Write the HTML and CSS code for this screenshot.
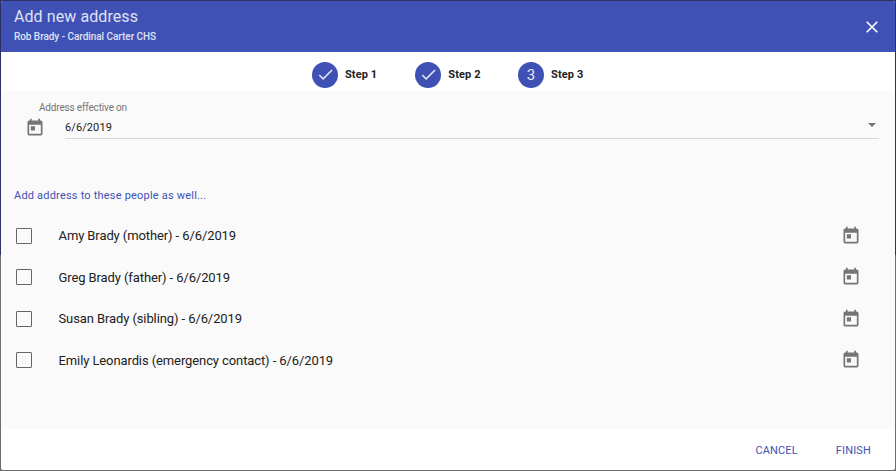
FILE: index.html
```html
<!DOCTYPE html>
<html lang="en">
<head>
<meta charset="utf-8">
<title>Add new address</title>
<link rel="stylesheet" href="styles.css">
</head>
<body>
<svg class="defs" aria-hidden="true">
  <symbol id="today" viewBox="0 0 24 24"><path d="M19 3h-1V1h-2v2H8V1H6v2H5c-1.11 0-1.99.9-1.99 2L3 19c0 1.1.89 2 2 2h14c1.1 0 2-.9 2-2V5c0-1.1-.9-2-2-2zm0 16H5V8h14v11zM7 10h5v5H7z"/></symbol>
  <symbol id="check" viewBox="0 0 24 24"><path d="M9 16.17L4.83 12l-1.42 1.41L9 19 21 7l-1.41-1.41z"/></symbol>
</svg>
<main class="dialog">
  <header class="header">
    <div>
      <h1 class="title">Add new address</h1>
      <p class="subtitle">Rob Brady - Cardinal Carter CHS</p>
    </div>
    <svg class="close" viewBox="0 0 12 12"><path d="M.7.7l10.6 10.6M11.3.7L.7 11.3"/></svg>
  </header>
  <nav class="steps">
    <div class="step"><span class="dot"><svg class="tick"><use href="#check"/></svg></span><b class="step-label">Step 1</b></div>
    <div class="step"><span class="dot"><svg class="tick"><use href="#check"/></svg></span><b class="step-label">Step 2</b></div>
    <div class="step"><span class="dot dot-number">3</span><b class="step-label">Step 3</b></div>
  </nav>
  <section class="content">
    <div class="date-label">Address effective on</div>
    <div class="date-row">
      <svg class="icon"><use href="#today"/></svg>
      <div class="date-input"><span class="date-value">6/6/2019</span><i class="arrow"></i></div>
    </div>
    <h2 class="people-title">Add address to these people as well...</h2>
    <ul class="people">
      <li class="person"><span class="box"></span><span class="name">Amy Brady (mother) - 6/6/2019</span><svg class="icon"><use href="#today"/></svg></li>
      <li class="person"><span class="box"></span><span class="name">Greg Brady (father) - 6/6/2019</span><svg class="icon"><use href="#today"/></svg></li>
      <li class="person"><span class="box"></span><span class="name">Susan Brady (sibling) - 6/6/2019</span><svg class="icon"><use href="#today"/></svg></li>
      <li class="person"><span class="box"></span><span class="name">Emily Leonardis (emergency contact) - 6/6/2019</span><svg class="icon"><use href="#today"/></svg></li>
    </ul>
  </section>
  <footer class="footer"><span class="action">CANCEL</span><span class="action">FINISH</span></footer>
</main>
</body>
</html>
```

FILE: styles.css
```css
* { box-sizing: border-box; margin: 0; padding: 0; }
body {
  height: 471px;
  padding: 1px;
  background: linear-gradient(#2d3265 0 255px, #6e6e6e 255px);
  font-family: Roboto, sans-serif;
  color: #212121;
  overflow: hidden;
}
.defs { display: none; }
.dialog {
  height: 469px;
  display: flex;
  flex-direction: column;
  background: #fff;
  border-radius: 2px;
  overflow: hidden;
}
.header {
  height: 51px;
  padding: 5px 17px 0 13px;
  display: flex;
  justify-content: space-between;
  background: #3f51b5;
  color: #dfe2f4;
}
.title { font-size: 16px; line-height: 22px; font-weight: 400; letter-spacing: .08px; }
.subtitle { font-size: 10px; line-height: 14px; font-weight: 500; margin-top: 2px; letter-spacing: -.05px; }
.close { width: 12px; height: 12px; margin-top: 15px; stroke: #fff; stroke-width: 1.6; fill: none; }
.steps { height: 39px; padding: 6px 0 0 311px; display: flex; align-items: center; gap: 38px; }
.step { display: flex; align-items: center; gap: 7px; }
.step:last-child { margin-left: -.5px; }
.dot {
  width: 26px; height: 26px; border-radius: 50%;
  background: #3f51b5; color: #e3e6f5;
  display: flex; align-items: center; justify-content: center;
}
.dot-number { font-size: 15px; }
.tick { width: 19px; height: 19px; fill: #e3e6f5; }
.step-label { font-size: 11px; font-weight: 700; line-height: 14px; letter-spacing: .1px; }
.content { height: 338px; background: #fafafa; padding: 10px 16px 0 13px; }
.date-label { margin-left: 25px; font-size: 10px; line-height: 14px; letter-spacing: -.17px; color: #757575; }
.date-row { display: flex; padding-left: 11px; gap: 20px; }
.icon { width: 20px; height: 20px; fill: #757575; flex: none; }
.date-row .icon { margin: 2.5px .5px 0 -.5px; }
.date-input {
  flex: 1; height: 24px; padding: 2px 3px 0 0;
  display: flex; align-items: center; justify-content: space-between;
  border-bottom: 1px solid #d6d6d6;
}
.date-value { font-size: 11px; letter-spacing: .1px; }
.arrow { border: 4px solid transparent; border-top-color: #757575; border-bottom: 0; margin-bottom: 5px; }
.people-title { margin-top: 49px; font-size: 11px; line-height: 16px; font-weight: 400; letter-spacing: .2px; color: #3f51b5; }
.people { margin-top: 11px; list-style: none; }
.person { height: 41.5px; padding: 0 18px 0 2px; display: flex; align-items: center; }
.box { width: 16px; height: 16px; border: 1px solid #666; border-radius: 1px; }
.name { flex: 1; margin-left: 26.5px; padding-top: .6px; font-size: 13px; line-height: 18px; letter-spacing: -.1px; }
.footer { height: 41px; padding: 2px 24px 0; display: flex; align-items: center; justify-content: flex-end; gap: 38px; }
.action { font-size: 11px; letter-spacing: .15px; color: #3f51b5; }
```
